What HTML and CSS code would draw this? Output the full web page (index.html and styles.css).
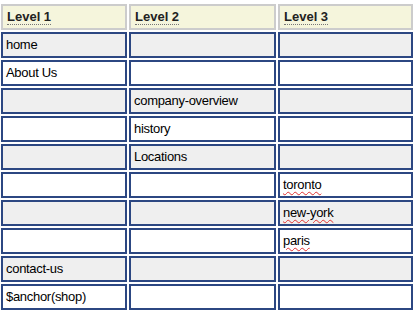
FILE: index.html
```html
<!DOCTYPE html>
<html>
<head>
<meta charset="utf-8">
<link rel="stylesheet" href="styles.css">
</head>
<body>
<div class="grid" role="table">
  <div class="cell head"><span class="abbr">Level 1</span></div>
  <div class="cell head"><span class="abbr">Level 2</span></div>
  <div class="cell head"><span class="abbr">Level 3</span></div>

  <div class="cell odd">home</div><div class="cell odd"></div><div class="cell odd"></div>
  <div class="cell even">About Us</div><div class="cell even"></div><div class="cell even"></div>
  <div class="cell odd"></div><div class="cell odd">company-overview</div><div class="cell odd"></div>
  <div class="cell even"></div><div class="cell even">history</div><div class="cell even"></div>
  <div class="cell odd"></div><div class="cell odd">Locations</div><div class="cell odd"></div>
  <div class="cell even"></div><div class="cell even"></div><div class="cell even"><span class="spell">toronto</span></div>
  <div class="cell odd"></div><div class="cell odd"></div><div class="cell odd"><span class="spell">new-york</span></div>
  <div class="cell even"></div><div class="cell even"></div><div class="cell even"><span class="spell">paris</span></div>
  <div class="cell odd">contact-us</div><div class="cell odd"></div><div class="cell odd"></div>
  <div class="cell even">$anchor(shop)</div><div class="cell even"></div><div class="cell even"></div>
</div>
</body>
</html>
```

FILE: styles.css
```css
html, body {
  margin: 0;
  padding: 0;
  background: #ffffff;
}

.grid {
  display: grid;
  grid-template-columns: 126px 147px 135px;
  grid-auto-rows: 26px;
  gap: 2px;
  padding: 4px 0 0 1px;
  font-family: "Liberation Sans", Arial, sans-serif;
  font-size: 13px;
  letter-spacing: -0.3px;
  color: #000;
}

.cell {
  box-sizing: border-box;
  border: 2px solid #2c4782;
  padding: 0 3px;
  display: flex;
  align-items: center;
  line-height: 16px;
  white-space: nowrap;
  overflow: hidden;
}

.cell.odd {
  background: #efefef;
}

.cell.even {
  background: #ffffff;
}

.cell.head {
  background: #f5f5dc;
  border-color: #cccccc;
  font-weight: bold;
  color: #222222;
  letter-spacing: 0;
  padding-left: 4px;
}

.abbr {
  border-bottom: 1px dotted #777777;
  line-height: 15px;
}

.spell {
  text-decoration-line: underline;
  text-decoration-style: wavy;
  text-decoration-color: #e03030;
  text-decoration-thickness: 1px;
  text-underline-offset: 2px;
}
```
